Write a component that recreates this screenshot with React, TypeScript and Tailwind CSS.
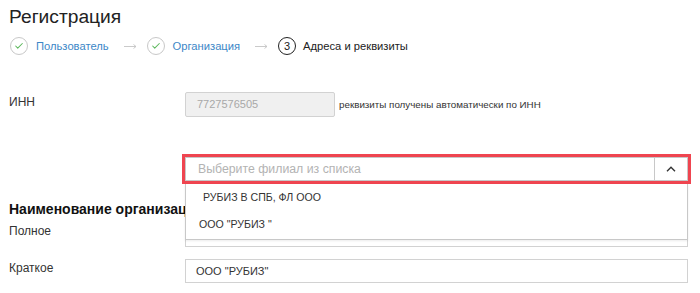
import { Check } from 'lucide-react';

function StepDone({ label }: { label: string }) {
    return (
        <div className="flex items-center gap-[8px]">
            <div className="w-[18px] h-[18px] rounded-full border border-[#c8c8c8] flex items-center justify-center">
                <Check size={10} strokeWidth={2.5} className="text-[#5cb85c]" />
            </div>
            <span className="text-[11.2px] text-[#3c87c7]">{label}</span>
        </div>
    );
}

function Arrow() {
    return (
        <svg width="13" height="7" viewBox="0 0 13 7" className="ml-[15px] mr-[10px] text-[#c4c4c4]">
            <path d="M0 3.5H12M9.5 1.5L12 3.5L9.5 5.5" fill="none" stroke="currentColor" strokeWidth="0.9" />
        </svg>
    );
}

export default function App() {
    return (
        <div className="w-[700px] h-[293px] bg-white overflow-hidden pl-[9px] pr-[12px] font-['Liberation_Sans',Arial,sans-serif] text-[#333]">
            <h1 className="pt-[5px] text-[19.2px] leading-[24px] text-[#222]">Регистрация</h1>

            {/* Steps */}
            <div className="mt-[8px] h-[18px] flex items-center pl-[1px]">
                <StepDone label="Пользователь" />
                <Arrow />
                <StepDone label="Организация" />
                <Arrow />
                <div className="flex items-center gap-[7px]">
                    <div className="w-[18px] h-[18px] rounded-full border-[1.5px] border-[#222] flex items-center justify-center text-[11px] text-[#222]">
                        3
                    </div>
                    <span className="text-[11.2px] text-[#222]">Адреса и реквизиты</span>
                </div>
            </div>

            {/* INN */}
            <div className="mt-[37px] flex">
                <div className="w-[176px] pt-[2px] text-[12px] leading-[16px]">ИНН</div>
                <div className="w-[150px] h-[25px] bg-[#f0f0f0] border border-[#d2d2d2] rounded-[2px] pl-[11px] flex items-center text-[11px] text-[#a8a8a8]">
                    7727576505
                </div>
                <span className="ml-[4px] pt-[6px] text-[9.8px] leading-[14px] text-[#333]">реквизиты получены автоматически по ИНН</span>
            </div>

            {/* Branch select */}
            <div className="mt-[40px] flex">
                <div className="w-[176px]" />
                <div className="relative flex-1">
                    <div className="h-[24px] flex border border-[#c8c8c8] outline outline-[3px] outline-[#ef4550] bg-white">
                        <div className="flex-1 pl-[12px] flex items-center text-[12.3px] text-[#b3b3b3]">Выберите филиал из списка</div>
                        <div className="w-[33px] border-l border-[#c8c8c8] flex items-center justify-center">
                            <svg width="10" height="6" viewBox="0 0 10 6">
                                <path d="M1 5.2L5 1.2L9 5.2" fill="none" stroke="#333" strokeWidth="1.4" />
                            </svg>
                        </div>
                    </div>
                    <div className="absolute z-10 left-0 right-0 top-[27px] h-[56px] bg-white border border-[#c8c8c8] border-t-0 shadow-[0_1px_2px_rgba(0,0,0,0.08)] text-[10.6px] text-[#333]">
                        <div className="h-[27px] pl-[17px] flex items-center">РУБИЗ В СПБ, ФЛ ООО</div>
                        <div className="h-[27px] pl-[13px] flex items-center">ООО "РУБИЗ "</div>
                    </div>
                </div>
            </div>

            <h2 className="mt-[19px] text-[14px] leading-[18px] font-bold text-[#111] whitespace-nowrap">Наименование организации</h2>

            <div className="mt-[5px] flex">
                <div className="w-[176px] text-[12px] leading-[16px]">Полное</div>
                <div className="flex-1 h-[24px] border border-[#d2d2d2] pl-[10px] flex items-center text-[11px]">ООО "РУБИЗ"</div>
            </div>

            <div className="mt-[12px] flex">
                <div className="w-[176px] pt-[1px] text-[12px] leading-[16px]">Краткое</div>
                <div className="flex-1 h-[24px] border border-[#d2d2d2] pl-[10px] flex items-center text-[11px]">ООО "РУБИЗ"</div>
            </div>
        </div>
    );
}
